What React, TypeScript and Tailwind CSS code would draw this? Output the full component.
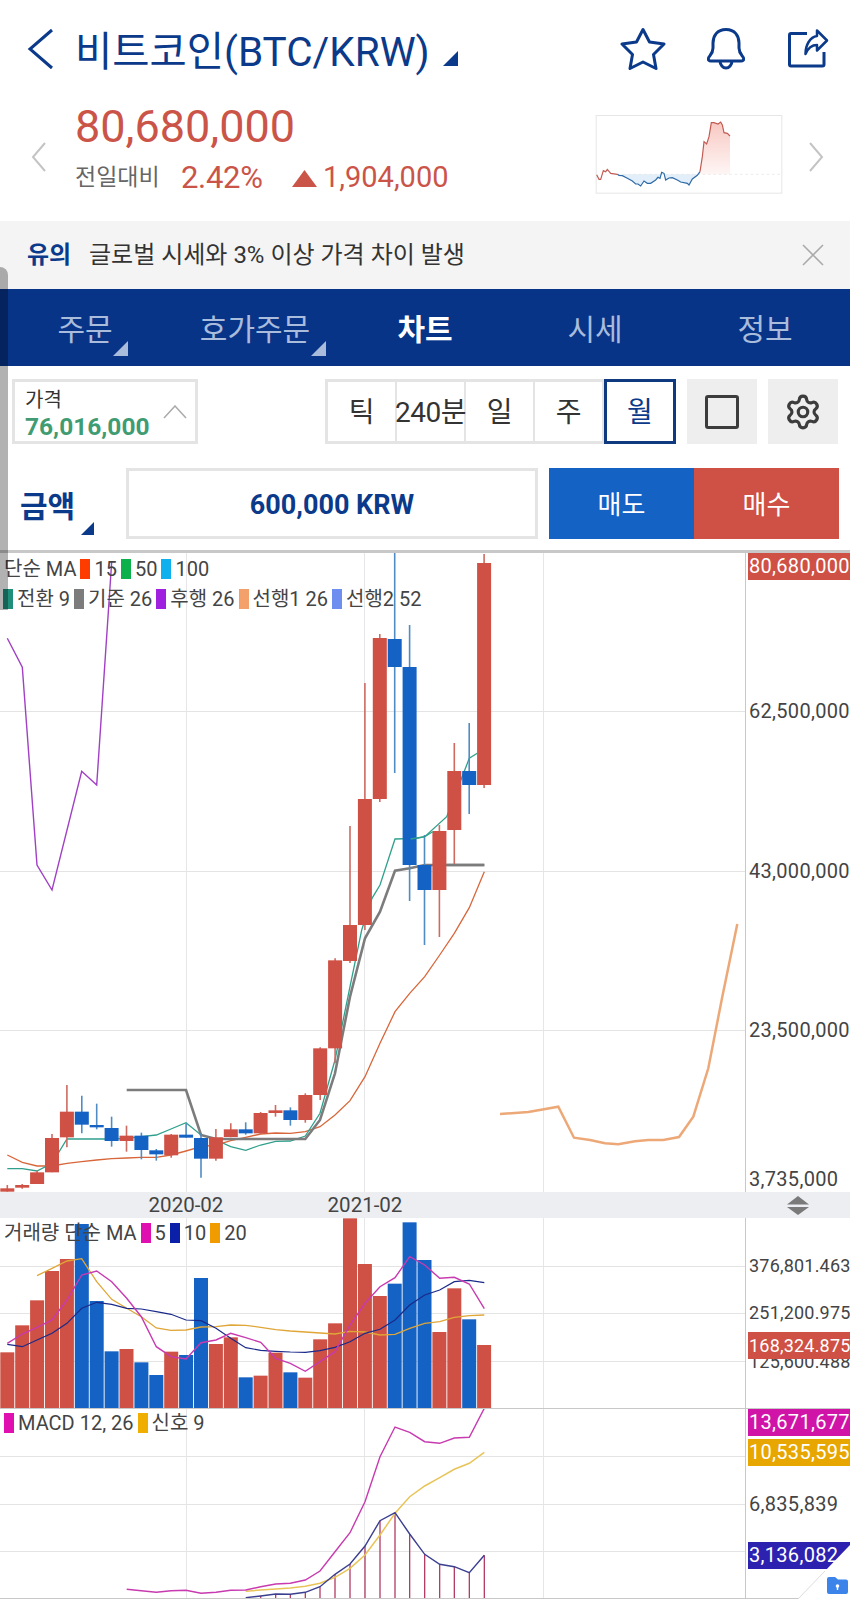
import React from 'react';
import { Settings } from 'lucide-react';

const RED = '#cf5044';
const BLUE = '#1462c4';
const X = (i: number) => 7.3 + 14.9 * i;
const z = (pts: number[][], oy: number) =>
  pts.map(([x, y]) => `${(x / 3).toFixed(1)},${(oy + y / 3).toFixed(1)}`).join(' ');

type C = [string, number, number, number, number];
const y4 = (v: number) => 930 + v / 3;
const early: C[] = [
  ['r', 775, 785, 765, 785], ['r', 765, 773, 762, 776], ['r', 727, 762, 722, 762], ['r', 624, 727, 612, 727],
  ['r', 545, 622, 465, 652], ['b', 545, 584, 497, 610], ['b', 585, 592, 521, 598], ['b', 594, 633, 560, 650],
  ['r', 617, 633, 587, 665], ['b', 617, 660, 608, 688], ['b', 661, 673, 657, 692], ['r', 614, 676, 612, 683],
  ['b', 614, 623, 580, 623], ['b', 624, 686, 610, 743], ['r', 622, 686, 597, 692], ['r', 598, 621, 580, 622],
  ['b', 598, 610, 577, 614], ['r', 549, 610, 546, 612], ['r', 541, 549, 525, 560], ['b', 541, 570, 532, 587],
  ['r', 495, 570, 490, 578], ['r', 355, 495, 352, 510], ['r', 91, 355, 85, 400],
];
const late: C[] = [
  ['r', 925, 961, 826, 963], ['r', 799, 925, 683, 930], ['r', 638, 799, 634, 802], ['b', 639, 667, 552, 773],
  ['b', 667, 865, 625, 901], ['b', 865, 890, 835, 945], ['r', 831, 890, 825, 937], ['r', 771, 830, 743, 865],
  ['b', 771, 785, 723, 814], ['r', 563, 785, 554, 788],
];
const candles: C[] = [
  ...early.map((c): C => [c[0], y4(c[1]), y4(c[2]), y4(c[3]), y4(c[4])]),
  ...late,
];

const teal = `${z([[22,716],[67,716],[111,723],[156,700],[201,627],[245,627],[290,627],[335,627],[380,625],[424,620],[469,615],[513,597],[558,578],[603,615],[648,630],[692,650],[737,661],[782,645],[827,634],[871,633],[916,618],[960,550],[1005,390],[1050,170],[1085,0]], 930)} ${z([[1116,1075],[1140,1035],[1185,897],[1250,895],[1274,890],[1340,830],[1408,655],[1432,640]], 540)}`;
const kijun = `${z([[380,480],[558,480],[603,615],[648,627],[916,627],[960,570],[1005,430],[1050,200],[1095,25]], 930)} ${z([[1140,1115],[1185,992],[1229,985],[1274,975],[1453,975]], 540)}`;
const chikou = z([[22,295],[67,382],[111,975],[156,1050],[245,694],[290,735],[335,65]], 540);
const ma15 = `${z([[22,675],[67,697],[111,708],[156,708],[201,700],[245,695],[290,690],[335,686],[380,684],[424,682],[469,682],[513,675],[558,663],[603,650],[648,645],[692,632],[737,622],[782,612],[827,609],[871,610],[916,605],[960,590],[1005,555],[1050,512],[1095,440],[1140,340],[1185,245],[1229,190],[1274,140],[1319,75]], 930)} ${z([[1363,1180],[1408,1103],[1453,995]], 540)}`;
const senkou = z([[60,642],[145,636],[235,620],[282,713],[330,720],[375,730],[415,733],[465,724],[505,720],[550,720],[597,711],[640,650],[685,505],[727,290],[772,72]], 900)
  .split(' ').map((p) => { const [a, b] = p.split(','); return `${(+a + 480).toFixed(1)},${b}`; }).join(' ');

const vols: [string, number][] = [
  ['r',457],['r',376],['r',301],['r',213],['r',177],['b',72],['b',303],['b',454],['r',447],['b',487],['b',525],
  ['r',455],['b',465],['b',234],['r',432],['r',412],['b',532],['r',527],['r',458],['b',517],['r',533],['r',418],
  ['r',370],['r',55],['r',192],['r',288],['b',251],['b',67],['b',180],['r',396],['r',265],['b',358],['r',435],
];
const vMa5 = z([[22,430],[67,402],[111,382],[156,360],[201,300],[245,225],[290,213],[335,245],[380,295],[424,350],[469,440],[513,470],[558,477],[603,428],[648,420],[692,400],[737,413],[782,427],[827,475],[871,490],[916,514],[960,485],[1005,455],[1050,375],[1095,310],[1140,260],[1185,233],[1229,170],[1274,195],[1319,235],[1363,232],[1408,252],[1453,326]], 1200);
const vMa10 = z([[22,433],[67,440],[111,420],[156,400],[201,370],[245,325],[290,307],[335,313],[380,325],[424,327],[469,335],[513,343],[558,360],[603,362],[648,385],[692,415],[737,443],[782,451],[827,454],[871,456],[916,457],[960,452],[1005,442],[1050,425],[1095,400],[1140,388],[1185,360],[1229,315],[1274,285],[1319,270],[1363,245],[1408,241],[1453,248]], 1200);
const vMa20 = z([[111,227],[156,205],[201,183],[245,176],[290,245],[335,298],[380,325],[424,350],[469,384],[513,391],[558,390],[603,381],[648,380],[692,375],[737,376],[782,382],[827,389],[871,393],[916,396],[960,399],[1005,402],[1050,394],[1095,396],[1140,405],[1185,403],[1229,385],[1274,370],[1319,365],[1363,352],[1408,347],[1453,345]], 1200);

const macd = z([[380,568],[424,572],[469,577],[513,572],[558,571],[603,580],[648,577],[692,571],[737,570],[782,560],[827,552],[871,550],[916,540],[960,513],[1005,455],[1050,398],[1095,305],[1140,170],[1185,81],[1229,97],[1274,125],[1319,130],[1363,114],[1408,112],[1453,25]], 1400);
const signal = z([[737,574],[782,570],[827,567],[871,564],[916,559],[960,550],[1005,532],[1050,505],[1095,465],[1140,405],[1185,340],[1229,290],[1274,258],[1319,233],[1363,208],[1408,190],[1453,157]], 1400);
const histPts = [[737,593],[782,588],[827,582],[871,583],[916,577],[960,560],[1005,523],[1050,492],[1095,438],[1140,362],[1185,338],[1229,402],[1274,463],[1319,493],[1363,500],[1408,518],[1453,466]];

const miniRedA = [[48,224],[55,238],[60,238],[68,212],[75,215],[80,208],[90,220],[110,223]];
const miniBlue = [[110,223],[115,226],[125,227],[140,235],[155,243],[165,252],[172,252],[180,258],[190,243],[200,250],[210,250],[225,240],[232,232],[238,235],[243,217],[250,220],[255,240],[265,234],[275,233],[290,240],[300,246],[320,250],[325,255],[335,237],[350,226],[358,215]];
const miniRedB = [[358,215],[365,170],[370,125],[378,132],[385,110],[392,68],[400,68],[412,72],[420,66],[425,75],[430,98],[440,100],[448,108]];
const pp = (a: number[][]) => a.map((p) => p.join(',')).join(' ');

function MiniChart() {
  return (
    <svg width="188" height="79" viewBox="45 45 560 237" className="shrink-0 mt-[11px]">
      <defs>
        <linearGradient id="mr" x1="0" y1="0" x2="0" y2="1">
          <stop offset="0" stopColor="#f8c8c2" />
          <stop offset="1" stopColor="#fef6f5" />
        </linearGradient>
      </defs>
      <rect x="46.5" y="46.5" width="557" height="233" fill="#fff" stroke="#e6e6e6" strokeWidth="3" />
      <polygon points={`${pp(miniBlue)} 358,223 110,223`} fill="#e2eef9" />
      <polygon points={`${pp(miniRedB)} 448,223 358,223`} fill="url(#mr)" />
      <line x1="110" y1="223" x2="604" y2="223" stroke="#e8e8e8" strokeWidth="2.5" strokeDasharray="8 8" />
      <polyline points={pp(miniRedA)} fill="none" stroke="#c25a52" strokeWidth="3.5" />
      <polyline points={pp(miniBlue)} fill="none" stroke="#2d6aa6" strokeWidth="3.5" />
      <polyline points={pp(miniRedB)} fill="none" stroke="#c25a52" strokeWidth="3.5" />
    </svg>
  );
}

function Swatch({ c }: { c: string }) {
  return <span className={`inline-block w-[10px] h-[20px] mx-[4px] ${c}`} />;
}

function Grid({ top, h, hs }: { top: number; h: number; hs: number[] }) {
  return (
    <g>
      {[186.5, 364.5, 543.5].map((x) => (
        <line key={x} x1={x} x2={x} y1={top} y2={top + h} stroke="#e6e6e8" strokeWidth="1" />
      ))}
      {hs.map((y) => (
        <line key={y} x1="0" x2="746" y1={y + 0.5} y2={y + 0.5} stroke="#e4e4e4" strokeWidth="1" />
      ))}
    </g>
  );
}

function AxisLabel({ y, text, small }: { y: number; text: string; small?: boolean }) {
  return (
    <div
      className={`absolute left-[3px] whitespace-nowrap text-[#444] h-[26px] leading-[26px] ${small ? 'text-[18px] tracking-[0.2px]' : 'text-[20px] tracking-[0.3px]'}`}
      style={{ top: y - 13 }}
    >
      {text}
    </div>
  );
}

function Tag({ y, text, c, small }: { y: number; text: string; c: string; small?: boolean }) {
  return (
    <div
      className={`absolute left-[2px] right-0 h-[27px] leading-[27px] pl-[1px] overflow-hidden whitespace-nowrap text-white ${small ? 'text-[18px] tracking-[0.2px]' : 'text-[20px] tracking-[0.3px]'} ${c}`}
      style={{ top: y }}
    >
      {text}
    </div>
  );
}

function Corner({ className }: { className: string }) {
  return (
    <svg width="15" height="15" viewBox="0 0 15 15" className={className}>
      <polygon points="15,0 15,15 0,15" fill="currentColor" />
    </svg>
  );
}

export default function App() {
  return (
    <div className="relative w-[850px] h-[1599px] overflow-hidden bg-white font-[Roboto,'Noto_Sans_CJK_KR',sans-serif]">
      {/* title */}
      <div className="flex items-center h-[98px] pl-[27px] pr-[21px] text-[#0b3a8a]">
        <svg width="27" height="42" viewBox="0 0 27 42" className="shrink-0">
          <polyline points="25,2 3,21 25,40" fill="none" stroke="currentColor" strokeWidth="3" />
        </svg>
        <span className="ml-[21px] text-[40.5px] leading-[52px] whitespace-nowrap mt-[6px]">비트코인(BTC/KRW)</span>
        <Corner className="ml-[13px] mt-[18px] text-[#0b3a8a]" />
        <div className="flex-1" />
        <svg width="46" height="44" viewBox="-1 -1 45 44" className="shrink-0 mr-[41px]">
          <polygon points="21.5,1.5 28,14 42.5,16 32,26.5 34.5,40.5 21.5,34 8.5,40.5 11,26.5 0.5,16 15,14" fill="none" stroke="currentColor" strokeWidth="3" strokeLinejoin="round" />
        </svg>
        <svg width="38" height="42" viewBox="0 0 38 42" className="shrink-0 mr-[43px]">
          <path d="M19 1.5C10 1.5 6 8 6 15V20C6 26 2 28 1.5 30C1 32 2 33 4 33H34C36 33 37 32 36.5 30C36 28 32 26 32 20V15C32 8 28 1.5 19 1.5ZM13 33C13 37 16 40 19 40C22 40 25 37 25 33" fill="none" stroke="currentColor" strokeWidth="3" strokeLinejoin="round" />
        </svg>
        <svg width="41" height="42" viewBox="0 0 41 42" className="shrink-0">
          <path d="M19 5.5H3Q1.5 5.5 1.5 7V36.5Q1.5 38 3 38H34.5Q36 38 36 36.5V24" fill="none" stroke="currentColor" strokeWidth="3" strokeLinejoin="round" />
          <path d="M29 2.5L39 12.5L29 22.5V17C24 17 20 20 17.5 26C17.5 17 22 9 29 8Z" fill="none" stroke="currentColor" strokeWidth="2.5" strokeLinejoin="round" />
        </svg>
      </div>

      {/* price */}
      <div className="flex items-start h-[123px] pt-[6px] pl-[31px] pr-[26px]">
        <svg width="15" height="30" viewBox="0 0 15 30" className="shrink-0 mt-[38px]">
          <polyline points="14,1 2,15 14,29" fill="none" stroke="#c4c4c4" strokeWidth="2" />
        </svg>
        <div className="ml-[29px]">
          <div className="text-[45px] leading-[46px] text-[#cb5449] whitespace-nowrap">80,680,000</div>
          <div className="flex items-center mt-[6px] h-[44px] whitespace-nowrap">
            <span className="text-[23px] text-[#666] w-[106px]">전일대비</span>
            <span className="text-[31px] text-[#cb5449] tracking-[-0.3px] w-[111px]">2.42%</span>
            <svg width="25" height="17" viewBox="0 0 25 17" className="shrink-0 mr-[6px]">
              <polygon points="12.5,0 25,17 0,17" fill="#cb5449" />
            </svg>
            <span className="text-[29px] text-[#cb5449]">1,904,000</span>
          </div>
        </div>
        <div className="flex-1" />
        <MiniChart />
        <svg width="15" height="30" viewBox="0 0 15 30" className="shrink-0 mt-[38px] ml-[26px]">
          <polyline points="1,1 13,15 1,29" fill="none" stroke="#c4c4c4" strokeWidth="2" />
        </svg>
      </div>

      {/* alert */}
      <div className="flex items-center h-[68px] pl-[27px] pr-[26px] bg-[#f4f4f4]">
        <span className="text-[24px] font-bold text-[#0b3a8a] w-[62px]">유의</span>
        <span className="text-[24px] text-[#333]">글로벌 시세와 3% 이상 가격 차이 발생</span>
        <div className="flex-1" />
        <svg width="22" height="22" viewBox="0 0 22 22">
          <path d="M1 1L21 21M21 1L1 21" stroke="#aaa" strokeWidth="1.6" fill="none" />
        </svg>
      </div>

      {/* nav */}
      <div className="grid grid-cols-5 h-[77px] bg-[#083488] text-[30px] text-[#a9bcdc]">
        {['주문', '호가주문', '차트', '시세', '정보'].map((t, i) => (
          <div key={t} className={`relative flex items-center justify-center pt-[3px] ${i === 2 ? 'text-white font-bold' : ''}`}>
            {t}
            {i === 0 && <Corner className="absolute left-[113px] top-[52px] text-[#a9bcdc]" />}
            {i === 1 && <Corner className="absolute left-[141px] top-[52px] text-[#a9bcdc]" />}
          </div>
        ))}
      </div>

      {/* toolbar */}
      <div className="flex items-stretch h-[65px] mt-[13px] pl-[12px]">
        <div className="relative w-[186px] border-[3px] border-[#e4e4e4] pl-[10px] pt-[6px]">
          <div className="text-[20px] leading-[25px] text-[#333]">가격</div>
          <div className="text-[24.5px] leading-[28px] font-bold text-[#3f9c72] whitespace-nowrap">76,016,000</div>
          <svg width="24" height="14" viewBox="0 0 24 14" className="absolute left-[148px] top-[23px]">
            <polyline points="1,13 12,1 23,13" fill="none" stroke="#aaa" strokeWidth="1.5" />
          </svg>
        </div>
        <div className="flex w-[351px] ml-[127px] text-[28px] text-[#333] bg-[#e4e4e4] pt-[3px] pb-[3px] pl-[3px]">
          {['틱', '240분', '일', '주'].map((t) => (
            <div key={t} className="flex items-center justify-center w-[67px] mr-[2px] pt-[2px] bg-white whitespace-nowrap tracking-[-0.5px]">
              {t}
            </div>
          ))}
          <div className="flex items-center justify-center flex-1 -mt-[3px] -mb-[3px] pt-[2px] border-[3px] border-[#0f3a80] bg-white text-[#0b3a8a]">
            월
          </div>
        </div>
        <div className="flex items-center justify-center w-[70px] ml-[11px] bg-[#eeeeee]">
          <div className="w-[34px] h-[34px] rounded-[3px] border-[3px] border-[#3c3c3c]" />
        </div>
        <div className="flex items-center justify-center w-[70px] ml-[11px] bg-[#eeeeee]">
          <Settings size={38} strokeWidth={2} color="#3c3c3c" />
        </div>
      </div>

      {/* order */}
      <div className="flex h-[71px] mt-[24px] pl-[20px]">
        <div className="relative w-[106px] flex items-center pt-[5px] text-[30px] font-bold text-[#0b3a8a]">
          금액
          <svg width="13" height="13" viewBox="0 0 13 13" className="absolute left-[61px] top-[54px]">
            <polygon points="13,0 13,13 0,13" fill="#0b3a8a" />
          </svg>
        </div>
        <div className="flex items-center justify-center w-[412px] pt-[3px] border-[3px] border-[#e4e4e4] text-[27px] font-bold text-[#0b3a8a]">
          600,000 KRW
        </div>
        <div className="flex items-center justify-center w-[145px] ml-[11px] pt-[4px] bg-[#1462c4] text-white text-[26px]">매도</div>
        <div className="flex items-center justify-center w-[145px] pt-[4px] bg-[#cf5044] text-white text-[26px]">매수</div>
      </div>

      {/* chart */}
      <div className="relative mt-[11px] border-t-[3px] border-[#c8c8c8] text-[20px]">
        {/* main */}
        <div className="relative flex h-[639px]">
          <svg width="745" height="639" viewBox="0 553 745 639" className="shrink-0">
            <Grid top={553} h={639} hs={[711, 871, 1030]} />
            <polyline points={ma15} fill="none" stroke="#d8663a" strokeWidth="1.3" />
            <polyline points={chikou} fill="none" stroke="#a040c4" strokeWidth="1.4" />
            <polyline points={senkou} fill="none" stroke="#eda878" strokeWidth="2.5" />
            <polyline points={teal} fill="none" stroke="#30a08c" strokeWidth="1.3" />
            <polyline points={kijun} fill="none" stroke="#7c7c7c" strokeWidth="2.6" />
            {candles.map((c, i) => (
              <g key={i}>
                <line x1={X(i)} x2={X(i)} y1={c[3]} y2={c[4]} stroke={c[0] === 'r' ? '#cf6a60' : '#4f8cc4'} strokeWidth="1.6" />
                <rect x={X(i) - 7} y={c[1]} width="14" height={c[2] - c[1]} fill={c[0] === 'r' ? RED : BLUE} />
              </g>
            ))}
            <polyline points={z([[1232,897],[1274,890],[1298,875]], 540)} fill="none" stroke="#30a08c" strokeWidth="1.3" />
            <polyline points={z([[1340,975],[1453,975]], 540)} fill="none" stroke="#7c7c7c" strokeWidth="2.6" />
          </svg>
          <div className="relative flex-1 border-l border-[#c8c8c8]">
            <Tag y={0} text="80,680,000" c="bg-[#cf5044]" />
            <AxisLabel y={158} text="62,500,000" />
            <AxisLabel y={318} text="43,000,000" />
            <AxisLabel y={477} text="23,500,000" />
            <AxisLabel y={626} text="3,735,000" />
          </div>
          <div className="absolute left-[4px] top-[2px] text-[#444] leading-[28px] whitespace-nowrap">
            <div className="flex items-center h-[28px]">
              단순 MA<Swatch c="bg-[#ff3c00]" />15<Swatch c="bg-[#0db14b]" />50<Swatch c="bg-[#0fb0ee]" />100
            </div>
            <div className="flex items-center h-[28px] mt-[2px] -ml-[5px]">
              <Swatch c="bg-[#1f8f7c]" />전환 9<Swatch c="bg-[#7c7c7c]" />기준 26<Swatch c="bg-[#a020e0]" />후행 26<Swatch c="bg-[#f4a06a]" />선행1 26<Swatch c="bg-[#6f8ff0]" />선행2 52
            </div>
          </div>
        </div>

        {/* time band */}
        <div className="relative h-[26px] bg-[#eceef2] text-[#444] text-[20.5px] leading-[26px]">
          <span className="absolute left-[186px] -translate-x-1/2">2020-02</span>
          <span className="absolute left-[365px] -translate-x-1/2">2021-02</span>
          <svg width="24" height="20" viewBox="0 0 24 20" className="absolute left-[786px] top-[4px]">
            <polygon points="12,0 23,8.5 1,8.5" fill="#7a7a7a" />
            <polygon points="12,19 23,11 1,11" fill="#7a7a7a" />
          </svg>
        </div>

        {/* volume */}
        <div className="relative flex h-[190px]">
          <svg width="745" height="190" viewBox="0 1218 745 190" className="shrink-0">
            <Grid top={1218} h={190} hs={[1266, 1313, 1361]} />
            {vols.map((v, i) => (
              <rect key={i} x={X(i) - 7} y={1200 + v[1] / 3} width="14" height={1408 - 1200 - v[1] / 3} fill={v[0] === 'r' ? RED : BLUE} />
            ))}
            <polyline points={vMa20} fill="none" stroke="#e0a638" strokeWidth="1.3" />
            <polyline points={vMa10} fill="none" stroke="#1a2a8a" strokeWidth="1.2" />
            <polyline points={vMa5} fill="none" stroke="#c83ab0" strokeWidth="1.4" />
          </svg>
          <div className="relative flex-1 border-l border-[#c8c8c8]">
            <AxisLabel small y={48} text="376,801.463" />
            <AxisLabel small y={95} text="251,200.975" />
            <AxisLabel small y={144} text="125,600.488" />
            <Tag small y={114} text="168,324.875" c="bg-[#cf5044]" />
          </div>
          <div className="absolute left-[4px] top-[1px] flex items-center h-[28px] text-[#444] whitespace-nowrap">
            거래량 단순 MA<Swatch c="bg-[#e010b0]" />5<Swatch c="bg-[#0a20a8]" />10<Swatch c="bg-[#f09c00]" />20
          </div>
        </div>

        {/* macd */}
        <div className="relative flex h-[191px] border-t border-b border-[#c8c8c8]">
          <svg width="745" height="189" viewBox="0 1409 745 189" className="shrink-0">
            <Grid top={1409} h={189} hs={[1456, 1504, 1551]} />
            {histPts.slice(1).map(([x, y]) => (
              <line key={x} x1={x / 3} x2={x / 3} y1={1400 + y / 3} y2="1598" stroke="#b23a62" strokeWidth="1.3" />
            ))}
            <polyline points={signal} fill="none" stroke="#e8c458" strokeWidth="1.5" />
            <polyline points={z(histPts, 1400)} fill="none" stroke="#3a3f90" strokeWidth="1.4" />
            <polyline points={macd} fill="none" stroke="#c83ab0" strokeWidth="1.4" />
          </svg>
          <div className="relative flex-1 border-l border-[#c8c8c8]">
            <Tag y={0} text="13,671,677" c="bg-[#d014a8]" />
            <Tag y={30} text="10,535,595" c="bg-[#e8a600]" />
            <AxisLabel y={95} text="6,835,839" />
            <Tag y={133} text="3,136,082" c="bg-[#2d22b0]" />
          </div>
          <div className="absolute left-[0px] top-[0px] flex items-center h-[28px] text-[#444] whitespace-nowrap">
            <Swatch c="bg-[#e010b0]" />MACD 12, 26<Swatch c="bg-[#f0ae00]" />신호 9
          </div>
        </div>
      </div>

      {/* page fold */}
      <svg width="54" height="54" viewBox="0 0 54 54" className="absolute right-0 bottom-0">
        <polygon points="54,0 2,54 54,54" fill="#fff" />
        <line x1="29" y1="26" x2="2" y2="54" stroke="#dcdcdc" strokeWidth="1" />
        <path d="M31 34Q31 32 33 32H39L42 34.5H50Q52 34.5 52 36.5V47Q52 49 50 49H33Q31 49 31 47Z" fill="#3d84ea" />
        <circle cx="41.5" cy="41" r="1.8" fill="#fff" />
        <rect x="40.8" y="41" width="1.4" height="4" fill="#fff" />
      </svg>

      {/* scroll thumb */}
      <div className="absolute left-0 top-[267px] w-[8px] h-[343px] bg-black/30 rounded-tr-[8px]" />
    </div>
  );
}
